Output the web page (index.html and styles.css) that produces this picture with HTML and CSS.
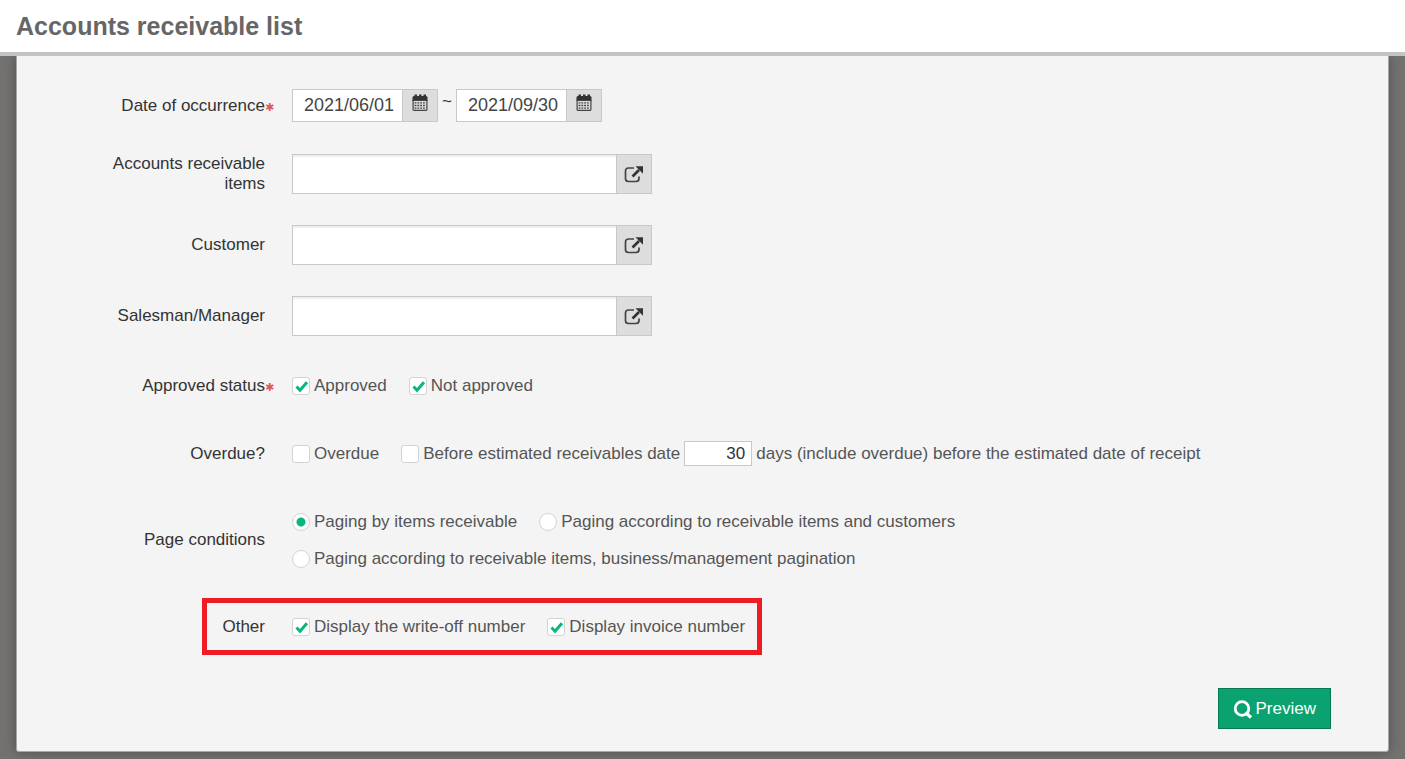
FILE: index.html
```html
<!DOCTYPE html>
<html lang="en">
<head>
<meta charset="utf-8">
<title>Accounts receivable list</title>
<link rel="stylesheet" href="styles.css">
</head>
<body>
<svg class="sprite" aria-hidden="true">
  <symbol id="calendar" viewBox="0 0 16 18">
    <path fill="#333" d="M2 2h12q1.500 0 1.500 1.500V7H.5V3.500Q.5 2 2 2z"/>
    <path fill="#333" d="M2.500 .5h2.500v4H2.500zM7 .5h2.500v4H7zM11.500 .5H14v4h-2.500z"/>
    <path fill="#ddd" stroke="#444" stroke-width="1.200" d="M1.100 6.500h13.800v8.900q0 1-1 1H2.100q-1 0-1-1z"/>
    <path stroke="#444" stroke-width="1.400" stroke-dasharray="1.800 1" d="M2.600 8.900h11M2.600 11.500h11M2.600 14.100h11"/>
  </symbol>
  <symbol id="popout" viewBox="0 0 20 18">
    <path fill="none" stroke="#444" stroke-width="1.700" d="M10 3H4.500Q1.500 3 1.500 6v7.500q0 3 3 3H12q3 0 3-3V11.500"/>
    <path stroke="#333" stroke-width="2.600" d="M8.500 11.500l6.500-6.500"/>
    <path fill="#333" d="M11.500 1.200H19v7.500z"/>
  </symbol>
</svg>
<header class="header"><h1 class="title">Accounts receivable list</h1></header>
<main class="stage">
  <form class="card">
    <div class="row row-date">
      <label class="name required" for="from">Date of occurrence</label>
      <div class="controls dates">
        <span class="group"><input class="date" id="from" type="text" value="2021/06/01"><button class="addon" type="button" aria-label="Choose start date"><svg class="cal"><use href="#calendar"/></svg></button></span>
        <span class="tilde">~</span>
        <span class="group"><input class="date" type="text" value="2021/09/30" aria-label="End date"><button class="addon" type="button" aria-label="Choose end date"><svg class="cal"><use href="#calendar"/></svg></button></span>
      </div>
    </div>
    <div class="row">
      <label class="name" for="items">Accounts receivable items</label>
      <div class="controls"><span class="group lookup"><input class="search" id="items" type="text"><button class="addon" type="button" aria-label="Find items"><svg class="pop"><use href="#popout"/></svg></button></span></div>
    </div>
    <div class="row">
      <label class="name" for="customer">Customer</label>
      <div class="controls"><span class="group lookup"><input class="search" id="customer" type="text"><button class="addon" type="button" aria-label="Find customer"><svg class="pop"><use href="#popout"/></svg></button></span></div>
    </div>
    <div class="row">
      <label class="name" for="manager">Salesman/Manager</label>
      <div class="controls"><span class="group lookup"><input class="search" id="manager" type="text"><button class="addon" type="button" aria-label="Find manager"><svg class="pop"><use href="#popout"/></svg></button></span></div>
    </div>
    <div class="row" role="group" aria-labelledby="n-status">
      <span class="name required" id="n-status">Approved status</span>
      <div class="controls">
        <label class="option"><input class="tick" type="checkbox" checked>Approved</label>
        <label class="option"><input class="tick" type="checkbox" checked>Not approved</label>
      </div>
    </div>
    <div class="row" role="group" aria-labelledby="n-overdue">
      <span class="name" id="n-overdue">Overdue?</span>
      <div class="controls">
        <label class="option"><input class="tick" type="checkbox">Overdue</label>
        <div class="option"><input class="tick" type="checkbox" id="before"><label for="before">Before estimated receivables date</label><input class="days" id="days" type="text" value="30"><label for="days">days (include overdue) before the estimated date of receipt</label></div>
      </div>
    </div>
    <div class="row" role="radiogroup" aria-labelledby="n-page">
      <span class="name" id="n-page">Page conditions</span>
      <div class="controls paging">
        <label class="option"><input class="tick dot" type="radio" name="page" checked>Paging by items receivable</label>
        <label class="option"><input class="tick dot" type="radio" name="page">Paging according to receivable items and customers</label>
        <label class="option"><input class="tick dot" type="radio" name="page">Paging according to receivable items, business/management pagination</label>
      </div>
    </div>
    <div class="row marked" role="group" aria-labelledby="n-other">
      <span class="name" id="n-other">Other</span>
      <div class="controls">
        <label class="option"><input class="tick" type="checkbox" checked>Display the write-off number</label>
        <label class="option"><input class="tick" type="checkbox" checked>Display invoice number</label>
      </div>
    </div>
    <div class="actions">
      <button class="preview" type="button"><svg class="lens" viewBox="0 0 20 20" aria-hidden="true"><circle cx="9" cy="9.500" r="6.800" fill="none" stroke="#fff" stroke-width="2.800"/><path d="M12.500 13.500l5.500 5" stroke="#fff" stroke-width="3.200"/></svg>Preview</button>
    </div>
  </form>
</main>
</body>
</html>
```
FILE: styles.css
```css
*, *::after { box-sizing: border-box; }
body {
  margin: 0;
  min-height: 100vh;
  display: flex;
  flex-direction: column;
  background: #737270;
  color: #333;
  font: 17px/20px "Liberation Sans", Arial, sans-serif;
}
input, button { font: inherit; color: inherit; margin: 0; border-radius: 0; }
button { cursor: pointer; }
.sprite { display: none; }
.header {
  padding: 11px 16px;
  background: #fff;
  border-bottom: 4px solid #c3c3c3;
}
.title { margin: 0; font-size: 25px; line-height: 30px; color: #666; }
.stage { flex: 1; padding: 0 16px 7px; overflow: hidden; }
.card {
  display: flex;
  flex-direction: column;
  gap: 31px;
  padding: 33px 57px 22px 0;
  background: #f4f4f4;
  border: 1px solid #a6a6a6;
  border-top: 0;
  border-radius: 0 0 3px 3px;
  box-shadow: 0 0 12px rgba(0, 0, 0, 0.3);
}
.row {
  display: grid;
  grid-template-columns: 248px 1fr;
  column-gap: 27px;
  align-items: center;
}
.row-date { min-height: 34px; }
.name { position: relative; padding-left: 88px; text-align: right; }
.required::after {
  content: "✱";
  position: absolute;
  left: 100%;
  top: 2px;
  color: #e05a5a;
  font-family: "DejaVu Sans", sans-serif;
  font-weight: bold;
  font-size: 11px;
}
.controls { display: flex; flex-wrap: wrap; column-gap: 22px; color: #555; }
.dates { column-gap: 4px; align-self: start; }
.tilde { width: 10px; line-height: 26px; color: #333; }
.group {
  display: flex;
  height: 33px;
  border: 1px solid #c8c8c8;
  background: #fff;
}
.date {
  width: 109px;
  padding: 0 0 2px 11px;
  border: 0;
  background: transparent;
  font-size: 18px;
  color: #444;
}
.addon {
  display: flex;
  align-items: center;
  justify-content: center;
  width: 35px;
  padding: 0;
  border: 0;
  border-left: 1px solid #c8c8c8;
  background: #ddd;
}
.cal { width: 16px; height: 18px; margin-bottom: 5px; }
.lookup { width: 360px; height: 40px; }
.search {
  flex: 1;
  min-width: 0;
  padding: 0 10px;
  border: 0;
  background: transparent;
  box-shadow: inset 0 2px 1px #eee;
}
.pop { width: 20px; height: 18px; }
.option { display: flex; align-items: center; gap: 4px; min-height: 37px; }
.tick {
  appearance: none;
  flex: none;
  width: 18px;
  height: 18px;
  border: 1px solid #d3d3d6;
  border-radius: 3px;
  background: #fff center / 16px 16px no-repeat;
}
.tick:checked {
  background-image: url("data:image/svg+xml,%3Csvg xmlns='http://www.w3.org/2000/svg' viewBox='0 0 16 16'%3E%3Cpath d='M3.500 8.500l3.500 3.700 7-8' fill='none' stroke='%2308b77e' stroke-width='3'/%3E%3C/svg%3E");
}
.dot { border-radius: 50%; }
.dot:checked { background-image: radial-gradient(circle, #08b77e 4px, transparent 5px); }
.days {
  width: 68px;
  height: 25px;
  padding: 0 6px;
  border: 1px solid #c8c8c8;
  background: #fff;
  text-align: right;
  color: #333;
}
.paging { max-width: 700px; }
.marked { position: relative; }
.marked::after {
  content: "";
  position: absolute;
  top: -10px;
  bottom: -10px;
  left: 185px;
  width: 560px;
  border: 5px solid #ee1c25;
  pointer-events: none;
}
.actions { display: flex; justify-content: flex-end; padding-top: 12px; }
.preview {
  display: flex;
  align-items: center;
  gap: 3px;
  height: 41px;
  padding: 0 14px;
  border: 1px solid #087a50;
  background: #09a270;
  color: #fff;
}
.lens { width: 20px; height: 20px; }
```
